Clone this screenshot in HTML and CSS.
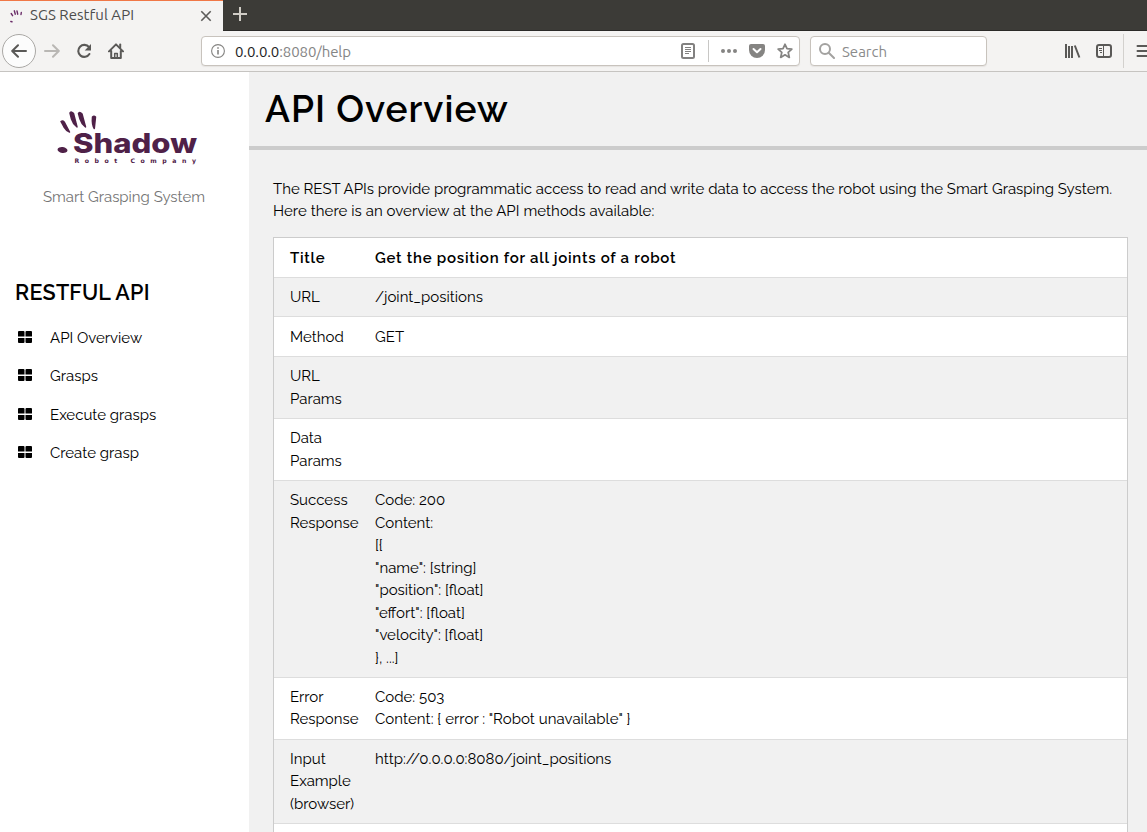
FILE: index.html
```html
<!DOCTYPE html>
<html lang="en">
<head>
<meta charset="utf-8">
<title>SGS Restful API</title>
<link rel="stylesheet" href="styles.css">
</head>
<body>
<div class="window">
  <div class="tabbar">
    <div class="tab">
      <svg class="favicon" width="16" height="16" viewBox="0 0 16 16" stroke="#6a2c68" stroke-width="1.4" stroke-linecap="round"><path d="M3.2 5.500l1.400 2.200M6.300 2.800l1 3.400M9 3l.7 3.200M13.300 4.500l-.3 2M2.800 13.500l1.200.3"/></svg>
      <span class="tab-title">SGS Restful API</span>
      <svg class="close" width="12" height="12" viewBox="0 0 12 12" stroke="#5c5b59" stroke-width="1.6"><path d="M1.3 1.3l9.4 9.4M10.7 1.3l-9.4 9.4"/></svg>
    </div>
    <svg class="newtab" width="14" height="14" viewBox="0 0 14 14" stroke="#d0cdc6" stroke-width="2"><path d="M7 0v14M0 7h14"/></svg>
  </div>
  <div class="navbar">
    <div class="back"><svg width="16" height="14" viewBox="0 0 16 14" fill="none" stroke="#5a5957" stroke-width="2" stroke-linecap="round" stroke-linejoin="round"><path d="M15 7H1.5M7 1.2L1.2 7 7 12.8"/></svg></div>
    <svg class="forward" width="16" height="14" viewBox="0 0 16 14" fill="none" stroke="#b9b7b4" stroke-width="2" stroke-linecap="round" stroke-linejoin="round"><path d="M1 7h13.5M9 1.2L14.8 7 9 12.8"/></svg>
    <svg class="reload" width="16" height="16" viewBox="0 0 16 16"><path d="M13 4.2A6 6 0 1 0 13.4 11" fill="none" stroke="#5a5957" stroke-width="2.1" stroke-linecap="round"/><path d="M15 1v6.5H8.7z" fill="#5a5957"/></svg>
    <svg class="home" width="16" height="16" viewBox="0 0 16 16" fill="none" stroke="#5a5957" stroke-width="2" stroke-linejoin="round" stroke-linecap="round"><path d="M1 8.4L8 1.4l7 7M3.2 8v7h9.6V8"/><path d="M6.7 15v-4.5h2.6V15" stroke-width="1.5"/><path d="M12.2 1.6v3"/></svg>
    <div class="urlbar">
      <svg width="14" height="14" viewBox="0 0 14 14" fill="none" stroke="#858482"><circle cx="7" cy="7" r="6.4" stroke-width="1.1"/><path d="M7 6v4.5M7 3.2v1.6" stroke-width="1.6"/></svg>
      <span class="url"><span class="host">0.0.0.0</span>:8080/help</span>
      <svg class="reader" width="14" height="16" viewBox="0 0 14 16" fill="none" stroke="#828180"><rect x="1" y="1" width="12" height="14" rx="1.5" stroke-width="2"/><path d="M4 4.5h6M4 6.5h6M4 8.5h6M4 10.5h4" stroke-width="1"/></svg>
      <i class="sep"></i>
      <svg class="dots" width="16" height="4" viewBox="0 0 16 4" fill="#858482"><circle cx="2" cy="2" r="2"/><circle cx="8" cy="2" r="2"/><circle cx="14" cy="2" r="2"/></svg>
      <svg class="pocket" width="16" height="14" viewBox="0 0 16 14"><path d="M2 0h12q2 0 2 2v4a8 8 0 0 1-16 0V2q0-2 2-2z" fill="#858482"/><path d="M4.5 5L8 8.3 11.5 5" fill="none" stroke="#fff" stroke-width="2" stroke-linecap="round" stroke-linejoin="round"/></svg>
      <svg class="star" width="16" height="16" viewBox="0 0 16 16" fill="none" stroke="#858482" stroke-width="1.8" stroke-linejoin="round"><path d="M8 1.3l2 4.4 4.8.5-3.6 3.2 1.1 5L8 11.8l-4.3 2.6 1.1-5L1.2 6.2 6 5.7z"/></svg>
    </div>
    <div class="search">
      <svg width="16" height="16" viewBox="0 0 16 16" fill="none" stroke="#a3a2a0" stroke-width="2"><circle cx="6" cy="6" r="5"/><path d="M9.7 9.7l5.3 5.3" stroke-linecap="round"/></svg>
      <span class="search-text">Search</span>
    </div>
    <svg class="library" width="16" height="14" viewBox="0 0 16 14" stroke="#5a5957" stroke-width="2"><path d="M1 0v14M4 2v12M7 2v12M9.800 1.500l4.600 12"/></svg>
    <svg class="panel" width="16" height="14" viewBox="0 0 16 14" fill="none" stroke="#5a5957"><rect x="1" y="1" width="14" height="12" rx="2" stroke-width="2"/><path d="M7.5 1v12M3 4.500h3M3 6.500h3M4 8.500h2" stroke-width="1"/></svg>
    <i class="menu-sep"></i>
    <svg class="menu" width="11" height="12" viewBox="0 0 11 12" stroke="#5a5957" stroke-width="2" stroke-linecap="round"><path d="M1.5 1H15M1.5 6H15M1.5 11H15"/></svg>
  </div>
  <div class="page">
    <aside class="sidebar">
      <svg class="logo" width="142" height="56" viewBox="0 0 142 56" fill="#4f2148">
        <g stroke="#4f2148" stroke-linejoin="round" stroke-width="1.500">
          <path d="M5 12.500q2-1.500 3.500 1l5 9.500q-3-1-5.500-5z"/>
          <path d="M14 4q1.500-2 3.500.5l3.500 13.500q-4-3-5.500-8z"/>
          <path d="M22.500 4.500q1.500-2 3.500.5l3.500 13q-4-3-5.500-8z"/>
          <path d="M36.500 8q1.500-1.500 3 0l-1.200 11.500q-2.500-4-1.800-11.500z"/>
        </g>
        <ellipse cx="6.500" cy="41" rx="5" ry="3" transform="rotate(8 6.500 41)"/>
        <text class="brand" x="17" y="44" textLength="124" lengthAdjust="spacingAndGlyphs">Shadow</text>
        <text class="brand-sub" x="18.500" y="53.500" textLength="121.500">Robot Company</text>
      </svg>
      <p class="tagline">Smart Grasping System</p>
      <h2 class="side-title">RESTFUL API</h2>
      <nav class="links">
        <a class="link"><svg width="14" height="12"><path d="M1 0h4.500q1 0 1 1v4.500H0V1q0-1 1-1zM8.500 0H13q1 0 1 1v4.500H7.500V1q0-1 1-1zM0 7h6.500v4q0 1-1 1H1q-1 0-1-1zM7.500 7H14v4q0 1-1 1H8.500q-1 0-1-1z"/></svg><span>API Overview</span></a>
        <a class="link"><svg width="14" height="12"><path d="M1 0h4.500q1 0 1 1v4.500H0V1q0-1 1-1zM8.500 0H13q1 0 1 1v4.500H7.500V1q0-1 1-1zM0 7h6.500v4q0 1-1 1H1q-1 0-1-1zM7.500 7H14v4q0 1-1 1H8.500q-1 0-1-1z"/></svg><span>Grasps</span></a>
        <a class="link"><svg width="14" height="12"><path d="M1 0h4.500q1 0 1 1v4.500H0V1q0-1 1-1zM8.500 0H13q1 0 1 1v4.500H7.500V1q0-1 1-1zM0 7h6.500v4q0 1-1 1H1q-1 0-1-1zM7.500 7H14v4q0 1-1 1H8.500q-1 0-1-1z"/></svg><span>Execute grasps</span></a>
        <a class="link"><svg width="14" height="12"><path d="M1 0h4.500q1 0 1 1v4.500H0V1q0-1 1-1zM8.500 0H13q1 0 1 1v4.500H7.500V1q0-1 1-1zM0 7h6.500v4q0 1-1 1H1q-1 0-1-1zM7.500 7H14v4q0 1-1 1H8.500q-1 0-1-1z"/></svg><span>Create grasp</span></a>
      </nav>
    </aside>
    <main class="main">
      <header class="head"><h1 class="title">API Overview</h1></header>
      <div class="content">
        <p class="intro">The REST APIs provide programmatic access to read and write data to access the robot using the Smart Grasping System.<br><span class="intro-more">Here there is an overview at the API methods available:</span></p>
        <table class="api">
          <tr><th>Title</th><th>Get the position for all joints of a robot</th></tr>
          <tr><td>URL</td><td>/joint_positions</td></tr>
          <tr><td>Method</td><td>GET</td></tr>
          <tr><td>URL<br>Params</td><td></td></tr>
          <tr><td>Data<br>Params</td><td></td></tr>
          <tr><td>Success<br>Response</td><td>Code: 200<br>Content:<br>[{<br>"name": [string]<br>"position": [float]<br>"effort": [float]<br>"velocity": [float]<br>}, ...]</td></tr>
          <tr><td>Error<br>Response</td><td>Code: 503<br><span class="error-body">Content: { error : "Robot unavailable" }</span></td></tr>
          <tr><td>Input<br>Example<br>(browser)</td><td>http://0.0.0.0:8080/joint_positions</td></tr>
          <tr><td>&nbsp;</td><td></td></tr>
        </table>
      </div>
    </main>
  </div>
</div>
</body>
</html>
```
FILE: styles.css
```css
* { box-sizing: border-box; }
body { margin: 0; overflow: hidden; color: #000; font: 15px/22.5px Raleway, Lato, sans-serif; }
svg { flex: none; display: block; }
.window { height: 832px; display: flex; flex-direction: column; overflow: hidden; }
.tabbar { height: 31px; flex: none; display: flex; align-items: flex-start; background: #3c3b37; border-bottom: 1px solid #2b2a28; font: 15px/20px Ubuntu, "Noto Sans", sans-serif; }
.tab { width: 223px; height: 31px; display: flex; align-items: center; padding: 0 11px 0 8px; background: #f4f3f2; border-top: 1px solid #f07746; color: #4c4c4c; }
.tab-title { flex: 1; margin-left: 6px; padding-bottom: 2px; letter-spacing: .05px; }
.close { margin-bottom: 1px; }
.newtab { margin: 7px 0 0 10px; }
.navbar { height: 41px; flex: none; display: flex; align-items: center; background: #f4f3f2; border-bottom: 1px solid #c6c4c1; font: 15px/20px Ubuntu, "Noto Sans", sans-serif; }
.back { width: 34px; height: 34px; margin-left: 2px; border: 1px solid #aaa8a5; border-radius: 50%; background: #fcfcfc; display: flex; align-items: center; justify-content: center; }
.forward { margin-left: 8px; }
.reload { margin-left: 16px; }
.home { margin-left: 16px; }
.urlbar, .search { height: 30px; display: flex; align-items: center; background: #fff; border: 1px solid #c8c3bd; border-radius: 4px; box-shadow: 0 1px 1px #e6e4e2; }
.urlbar { width: 599px; margin-left: 77px; padding: 0 6px 0 9px; }
.url { flex: 1; margin-left: 10px; padding-top: 1px; color: #858585; letter-spacing: -.1px; }
.host { color: #1e1e1e; }
.sep { width: 1px; height: 22px; margin: 0 12px 0 13px; background: #c8c7c5; }
.pocket { margin: 0 12px; }
.search { width: 177px; margin-left: 10px; padding-left: 8px; }
.search-text { margin-left: 7px; padding-top: 1px; color: #8b8b8b; }
.library { margin-left: 78px; }
.panel { margin-left: 15px; }
.menu-sep { width: 1px; height: 34px; margin-left: 11px; background: #d3d1ce; }
.menu { margin-left: 12px; }
.page { flex: 1; min-height: 0; display: flex; }
.sidebar { width: 249px; flex: none; background: #fff; }
.logo { margin: 37px 0 0 56px; }
.brand { font: 800 27.5px Inter, sans-serif; }
.brand-sub { font: 700 6.2px "DejaVu Sans", sans-serif; }
.tagline { margin: 21px 0 0 43px; color: #757575; letter-spacing: -.02px; }
.side-title { margin: 67px 0 0 15px; font-size: 21.5px; line-height: 33px; font-weight: 600; letter-spacing: .2px; }
.links { margin-top: 10px; }
.link { height: 38.5px; display: flex; align-items: center; padding-left: 18px; }
.link svg { margin-bottom: 2px; }
.link span { margin-left: 18px; }
.main { flex: 1; min-width: 0; background: #f1f1f1; overflow: hidden; }
.head { height: 78px; padding: 9px 16px; border-bottom: 4px solid #ccc; }
.title { margin: 0; font-size: 37px; line-height: 56px; font-weight: 600; letter-spacing: 1px; }
.content { padding: 27.5px 19px 0 24px; }
.intro { margin: 0 0 14.9px; white-space: nowrap; }
.intro-more { letter-spacing: .05px; }
.api { width: 855px; table-layout: fixed; border-collapse: separate; border-spacing: 0; background: #fff; border: 1px solid #ccc; }
.api td, .api th { padding: 8.2px 8px 7.8px; text-align: left; vertical-align: top; border-bottom: 1px solid #ddd; white-space: nowrap; }
.api th { font-weight: 600; letter-spacing: .74px; }
.error-body { letter-spacing: .05px; }
.api tr > :first-child { width: 93px; padding-left: 16px; }
.api tr:nth-child(even) { background: #f1f1f1; }
```
